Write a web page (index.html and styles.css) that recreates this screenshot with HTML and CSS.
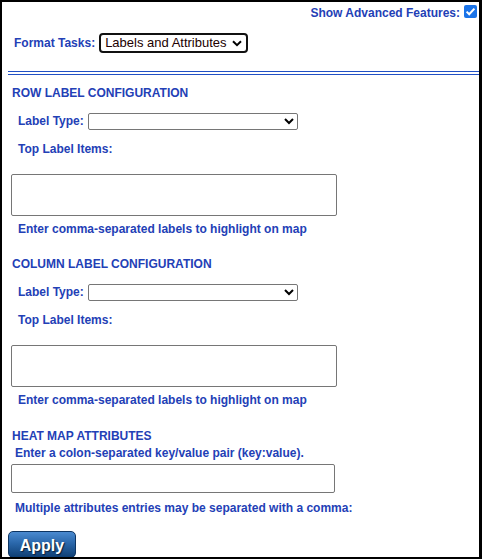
FILE: index.html
```html
<!DOCTYPE html>
<html>
<head>
<meta charset="utf-8">
<link rel="stylesheet" href="styles.css">
</head>
<body>
<div class="frame">
  <div class="top">
    <span class="lbl">Show Advanced Features:</span>
    <svg class="check" width="13" height="13" viewBox="0 0 13 13">
      <rect x="0" y="0" width="13" height="13" rx="2" fill="#1a73e8"/>
      <path d="M2.6 6.6 L5.2 9.2 L10.4 3.6" fill="none" stroke="#fff" stroke-width="2"/>
    </svg>
  </div>
  <div class="format">
    <span class="lbl">Format Tasks:</span>
    <span class="selwrap">
      <select class="sel sel-main"><option>Labels and Attributes</option></select>
      <svg class="chev" width="10" height="7" viewBox="0 0 10 7"><path d="M1 1.2 L5 5.2 L9 1.2" fill="none" stroke="#000" stroke-width="2"/></svg>
    </span>
  </div>
  <div class="rule"><div class="line"></div><div class="line"></div></div>

  <div class="section">
    <div class="head">ROW LABEL CONFIGURATION</div>
    <div class="row-type">
      <span class="lbl">Label Type:</span>
      <select class="sel sel-type"><option></option></select>
    </div>
    <div class="lbl sub">Top Label Items:</div>
    <textarea class="area"></textarea>
    <div class="lbl hint">Enter comma-separated labels to highlight on map</div>
  </div>

  <div class="section">
    <div class="head">COLUMN LABEL CONFIGURATION</div>
    <div class="row-type">
      <span class="lbl">Label Type:</span>
      <select class="sel sel-type"><option></option></select>
    </div>
    <div class="lbl sub">Top Label Items:</div>
    <textarea class="area"></textarea>
    <div class="lbl hint">Enter comma-separated labels to highlight on map</div>
  </div>

  <div class="heat">
    <div class="head">HEAT MAP ATTRIBUTES</div>
    <div class="lbl note1">Enter a colon-separated key/value pair (key:value).</div>
    <input class="field" type="text">
    <div class="lbl note2">Multiple attributes entries may be separated with a comma:</div>
  </div>
  <button class="apply">Apply</button>
</div>
</body>
</html>
```
FILE: styles.css
```css
* { box-sizing: border-box; }
html, body { margin: 0; padding: 0; background: #fff; }
body { font-family: "Liberation Sans", Arial, sans-serif; }
.frame {
  width: 482px;
  height: 559px;
  border: 2px solid #000;
  border-right-width: 3px;
  overflow: hidden;
  display: flex;
  flex-direction: column;
  align-items: flex-start;
}
.lbl, .head {
  font-size: 12px;
  line-height: 14px;
  font-weight: bold;
  color: #2340b6;
  white-space: nowrap;
}
.top {
  align-self: stretch;
  display: flex;
  justify-content: flex-end;
  align-items: flex-start;
  padding: 3px 2px 0 0;
  gap: 4px;
  height: 18px;
  flex-shrink: 0;
}
.top .lbl { margin-top: 1px; }
.check { display: block; }
.format {
  display: flex;
  align-items: center;
  gap: 4px;
  margin-top: 13px;
  padding-left: 12px;
  height: 20px;
  flex-shrink: 0;
}
.selwrap {
  position: relative;
  display: block;
  width: 149px;
  height: 20px;
}
.chev {
  position: absolute;
  right: 6px;
  top: 7px;
  pointer-events: none;
}
.sel {
  font-family: "Liberation Sans", Arial, sans-serif;
  font-size: 13.333px;
  background: #fff;
  color: #000;
  margin: 0;
}
.sel-main {
  -webkit-appearance: none;
  appearance: none;
  display: block;
  width: 149px;
  height: 20px;
  border: 2px solid #111;
  border-radius: 4px;
  color: #200;
  font-size: 13px;
  line-height: 16px;
  padding: 0 0 0 4px;
}
.rule {
  margin-top: 18px;
  margin-left: 6px;
  width: calc(100% - 6px);
  display: flex;
  flex-direction: column;
  gap: 2px;
  flex-shrink: 0;
}
.line {
  height: 1px;
  background: #2150c4;
}
.section, .heat {
  display: flex;
  flex-direction: column;
  align-items: flex-start;
  flex-shrink: 0;
}
.head { padding-left: 10px; }
.section .head { margin-top: 11px; }
.section + .section .head { margin-top: 21px; }
.row-type {
  display: flex;
  align-items: flex-start;
  gap: 4px;
  margin-top: 13px;
  padding-left: 16px;
  height: 17px;
}
.row-type .lbl { margin-top: 1px; }
.sel-type {
  width: 210px;
  height: 17px;
  border: 1px solid #767676;
  border-radius: 2px;
  padding: 0;
}
.sub { margin-top: 12px; padding-left: 16px; }
.area {
  margin: 18px 0 0 9px;
  width: 326px;
  height: 42px;
  border: 1px solid #767676;
  border-radius: 2px;
  resize: none;
  display: block;
  padding: 2px;
}
.hint { margin-top: 6px; padding-left: 16px; }
.heat .head { margin-top: 22px; }
.note1 { margin-top: 3px; padding-left: 13px; }
.field {
  margin: 4px 0 0 9px;
  width: 324px;
  height: 29px;
  border: 1px solid #767676;
  border-radius: 2px;
  display: block;
  padding: 0 2px;
}
.note2 { margin-top: 8px; padding-left: 13px; }
.apply {
  margin: 16px 0 0 6px;
  width: 68px;
  height: 27px;
  flex-shrink: 0;
  border: 1px solid #0d3563;
  border-radius: 5px;
  background: linear-gradient(to bottom, #4a8ad0 0%, #2a67aa 45%, #0f3f74 100%);
  color: #fff;
  font-family: "Liberation Sans", Arial, sans-serif;
  font-weight: bold;
  font-size: 16px;
  line-height: 20px;
  padding: 2px 0 0 0;
  text-shadow: 1px 1px 1px #0a1f3a;
}
```
